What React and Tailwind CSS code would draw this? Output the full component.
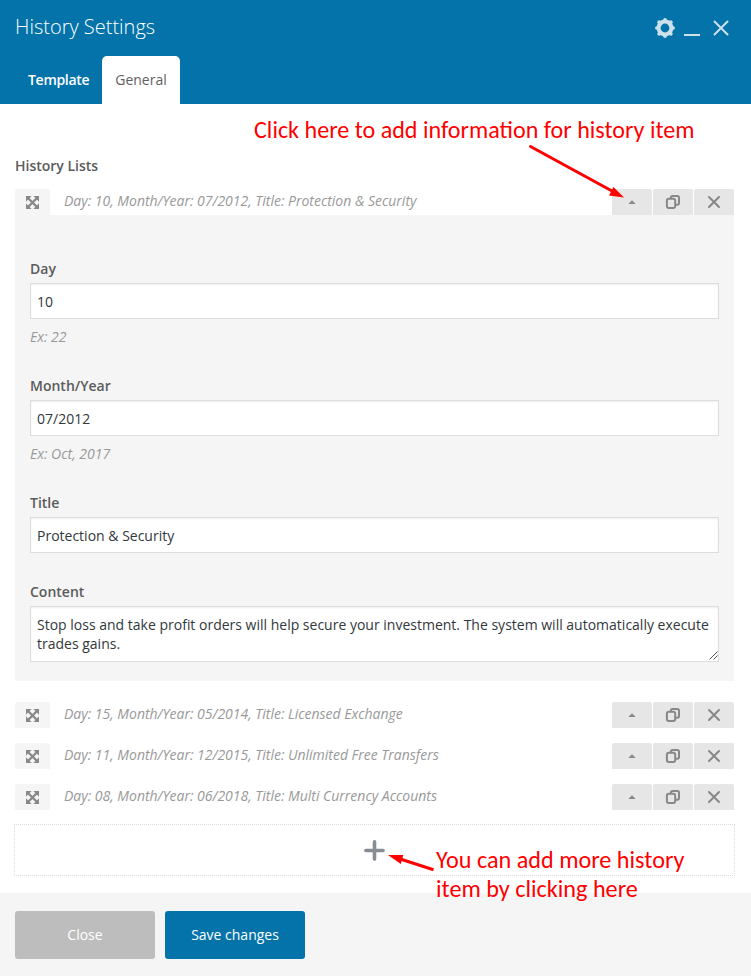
const ITEMS = [
  'Day: 15, Month/Year: 05/2014, Title: Licensed Exchange',
  'Day: 11, Month/Year: 12/2015, Title: Unlimited Free Transfers',
  'Day: 08, Month/Year: 06/2018, Title: Multi Currency Accounts',
];

function GearIcon() {
  return (
    <svg className="h-5 w-5" viewBox="0 0 20 20" fill="#cde1ec">
      <circle cx="10" cy="10" r="6.4" fill="none" stroke="#cde1ec" strokeWidth="4" />
      <circle cx="10" cy="1.8" r="1.8" />
      <circle cx="10" cy="18.2" r="1.8" />
      <circle cx="1.8" cy="10" r="1.8" />
      <circle cx="18.2" cy="10" r="1.8" />
      <circle cx="4.2" cy="4.2" r="1.9" />
      <circle cx="15.8" cy="4.2" r="1.9" />
      <circle cx="4.2" cy="15.8" r="1.9" />
      <circle cx="15.8" cy="15.8" r="1.9" />
    </svg>
  );
}

function MoveIcon() {
  return (
    <svg className="mt-px h-[13px] w-[13px]" viewBox="0 0 13 13" fill="#888">
      <path d="M0 0H5.4L0 5.4ZM7.6 0H13V5.4ZM0 7.6V13H5.4ZM13 7.6V13H7.6Z" stroke="#888" strokeWidth="0.3" />
      <path d="M2 2L11 11M11 2L2 11" stroke="#888" strokeWidth="2.3" />
    </svg>
  );
}

function CopyIcon() {
  return (
    <svg className="h-4 w-4" viewBox="0 0 16 16" fill="none" stroke="#888" strokeWidth="2">
      <rect x="1.9" y="4.7" width="8.3" height="9.3" rx="1.9" />
      <path d="M5.9 4.6V3.6Q5.9 1.9 7.6 1.9H12.3Q14 1.9 14 3.6V9Q14 10.7 12.3 10.7H10.6" />
    </svg>
  );
}

function CrossIcon() {
  return (
    <svg className="h-[14px] w-[14px]" viewBox="0 0 14 14" fill="none" stroke="#888" strokeWidth="2" strokeLinecap="round">
      <path d="M2 2L12 12M12 2L2 12" />
    </svg>
  );
}

function ItemRow({ text }) {
  return (
    <div className="flex h-[26px] justify-between">
      <div className="flex">
        <div className="flex w-[35px] items-center justify-center rounded-t-[2px] bg-[#f5f5f5]">
          <MoveIcon />
        </div>
        <span className="ml-[14px] whitespace-nowrap text-[14px] leading-6 tracking-[-0.01px] text-[#999] italic">{text}</span>
      </div>
      <div className="flex gap-px">
        <button className="flex w-10 items-center justify-center rounded-t-[2px] bg-[#e6e6e6]">
          <svg className="h-1 w-2" viewBox="0 0 8 4" fill="#888">
            <path d="M0.3 4L4 0.2L7.7 4Z" />
          </svg>
        </button>
        <button className="flex w-10 items-center justify-center rounded-t-[2px] bg-[#e6e6e6]">
          <CopyIcon />
        </button>
        <button className="flex w-10 items-center justify-center rounded-t-[2px] bg-[#e6e6e6]">
          <CrossIcon />
        </button>
      </div>
    </div>
  );
}

function Field({ label, value, hint }) {
  return (
    <div className="mb-[29px]">
      <div className="h-5 text-[14px] leading-5 font-semibold text-[#5b5b5b]">{label}</div>
      <div className="mt-1 h-9 border border-[#ddd] bg-white px-1.5 text-[14px] leading-9 text-[#32373c] shadow-[inset_0_1px_2px_rgba(0,0,0,0.07)]">
        {value}
      </div>
      {hint && <div className="mt-2 h-5 text-[14px] leading-5 text-[#999] italic">{hint}</div>}
    </div>
  );
}

export default function App() {
  return (
    <div className="relative flex h-[976px] w-[751px] flex-col overflow-hidden bg-white font-['Open_Sans',sans-serif]">
      <header className="flex h-[104px] flex-col justify-between bg-[#0473aa]">
        <div className="flex justify-between pr-[22px] pl-[15px]">
          <h1 className="pt-[13px] text-[20px] leading-7 font-light text-white">History Settings</h1>
          <div className="flex pt-[18px]">
            <GearIcon />
            <div className="mt-4 ml-[9px] h-[2px] w-4 bg-[#cde1ec]" />
            <svg className="mt-[2px] ml-[13px] h-4 w-4" viewBox="0 0 16 16" fill="none" stroke="#cde1ec" strokeWidth="2" strokeLinecap="round">
              <path d="M1.5 1.5L14.5 14.5M14.5 1.5L1.5 14.5" />
            </svg>
          </div>
        </div>
        <nav className="flex h-12 pl-[15px] text-[14px] leading-12">
          <div className="w-[87px] pl-[13px] font-semibold tracking-[-0.3px] text-white">Template</div>
          <div className="w-[78px] rounded-t-[5px] bg-white text-center text-[#5f5f5f]">General</div>
        </nav>
      </header>

      <main className="h-[789px] px-[15px] pt-[52px]">
        <div className="w-[719px]">
          <div className="mb-[13px] h-5 text-[14px] leading-5 font-semibold text-[#5b5b5b]">History Lists</div>
          <ItemRow text="Day: 10, Month/Year: 07/2012, Title: Protection & Security" />
          <div className="mb-[21px] h-[466px] bg-[#f5f5f5] px-[15px] pt-11">
            <Field label="Day" value="10" hint="Ex: 22" />
            <Field label="Month/Year" value="07/2012" hint="Ex: Oct, 2017" />
            <Field label="Title" value="Protection & Security" />
            <div className="h-5 text-[14px] leading-5 font-semibold text-[#5b5b5b]">Content</div>
            <div className="mt-1 flex h-14 items-end justify-between border border-[#ddd] bg-white pl-1.5 shadow-[inset_0_1px_2px_rgba(0,0,0,0.07)]">
              <p className="h-full pt-2 text-[14px] leading-[19px] whitespace-nowrap text-[#32373c]">
                Stop loss and take profit orders will help secure your investment. The system will automatically execute
                <br />
                trades gains.
              </p>
              <svg className="mr-px mb-px h-[9px] w-[9px] shrink-0" viewBox="0 0 9 9" stroke="#555" strokeWidth="1">
                <path d="M0.5 8.5L8.5 0.5M4.5 8.5L8.5 4.5" />
              </svg>
            </div>
          </div>
          <div className="flex flex-col gap-[15px]">
            {ITEMS.map((t) => (
              <ItemRow key={t} text={t} />
            ))}
          </div>
        </div>
        <div className="mt-[14px] -ml-px flex h-[52px] w-[721px] justify-center border border-dotted border-[#ddd] pt-[15px]">
          <svg className="h-[21px] w-[21px]" viewBox="0 0 21 21" stroke="#888c94" strokeWidth="3.6" strokeLinecap="round">
            <path d="M10.5 1.9V19.1M1.9 10.5H19.1" />
          </svg>
        </div>
      </main>

      <footer className="flex h-[83px] gap-[10px] bg-[#f5f5f5] pt-[18px] pl-[15px] text-[14px]">
        <button className="h-12 w-[140px] rounded-[3px] bg-[#bdbdbd] pb-0.5 text-white">Close</button>
        <button className="h-12 w-[140px] rounded-[3px] bg-[#0473aa] pb-0.5 text-white">Save changes</button>
      </footer>

      <div className="absolute top-[115px] left-[254px] font-[Carlito,Lato,sans-serif] text-[24.1px] leading-[30px] whitespace-nowrap text-[#f00]">
        Click here to add information for history item
      </div>
      <div className="absolute top-[845px] left-[436px] font-[Carlito,Lato,sans-serif] text-[24.2px] leading-[29px] whitespace-nowrap text-[#f00]">
        You can add more history
        <br />
        item by clicking here
      </div>
      <svg className="absolute top-[140px] left-[520px] h-[65px] w-[110px]" viewBox="520 140 110 65" fill="#f00" stroke="#f00">
        <path d="M530.5 146.5L612 191" strokeWidth="3" strokeLinecap="round" />
        <path d="M624 197.5L613.5 187L609 195.5Z" stroke="none" />
      </svg>
      <svg className="absolute top-[850px] left-[385px] h-[25px] w-[52px]" viewBox="385 850 52 25" fill="#f00" stroke="#f00">
        <path d="M433.5 869.8L401 859.3" strokeWidth="3" />
        <path d="M388 855L403.3 855L400.8 864Z" stroke="none" />
      </svg>
    </div>
  );
}
